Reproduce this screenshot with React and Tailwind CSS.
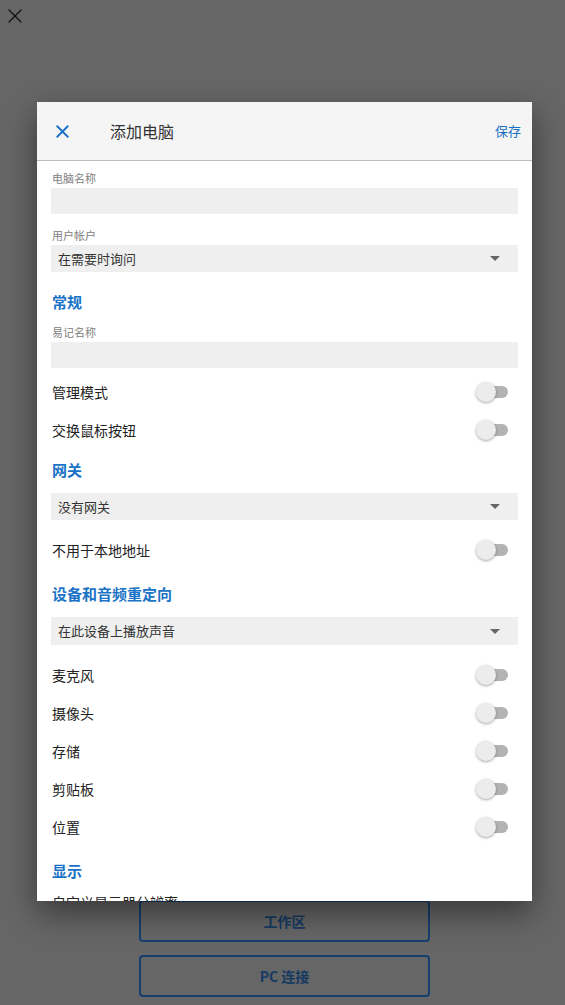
import { X } from 'lucide-react'

const font = { fontFamily: '"Noto Sans CJK SC", "Noto Sans", sans-serif' }

const Toggle = () => (
  <div className="relative w-[32px] h-[20px] mr-[10px] flex items-center">
    <div className="absolute right-0 w-[22px] h-[12px] rounded-full bg-[#b3b3b3]" />
    <div className="absolute left-0 w-[20px] h-[20px] rounded-full bg-[#ececec] shadow-[0_1px_3px_rgba(0,0,0,0.35)]" />
  </div>
)

const ToggleRow = ({ label, className = '', toggle = true }) => (
  <div className={`h-[38px] flex items-center justify-between pl-px ${className}`}>
    <span className="text-[14px] text-[#222]">{label}</span>
    {toggle && <Toggle />}
  </div>
)

const Select = ({ value, className = '' }) => (
  <div className={`h-[27px] bg-[#efefef] flex items-center justify-between pl-[7px] pr-[18px] ${className}`}>
    <span className="text-[13px] text-[#333]">{value}</span>
    <div className="w-0 h-0 border-l-[5px] border-r-[5px] border-t-[5px] border-l-transparent border-r-transparent border-t-[#666]" />
  </div>
)

const Label = ({ children, className = '' }) => (
  <div className={`text-[11px] leading-[16px] text-[#808080] pl-px ${className}`}>{children}</div>
)

const Heading = ({ children, className = '' }) => (
  <div className={`text-[15px] leading-[20px] font-bold text-[#1a73c6] pl-px ${className}`}>{children}</div>
)

export default function App() {
  return (
    <div className="relative w-[565px] h-[1005px] bg-[#666666] overflow-hidden" style={font}>
      {/* page behind the dialog */}
      <div className="flex flex-col h-full">
        <div className="pl-[3px] pt-[4px]">
          <X size={24} strokeWidth={1.3} className="text-[#111]" />
        </div>
        <div className="mt-auto mb-[8px] ml-[4px] flex flex-col items-center gap-[13px]">
          <div className="w-[291px] h-[42px] border-2 border-[#173f6e] rounded-[4px] flex items-center justify-center text-[14px] font-bold text-[#173a63]">
            工作区
          </div>
          <div className="w-[291px] h-[42px] border-2 border-[#173f6e] rounded-[4px] flex items-center justify-center text-[14px] font-bold text-[#173a63]">
            PC 连接
          </div>
        </div>
      </div>

      {/* dialog */}
      <div className="absolute left-[37px] top-[102px] w-[495px] h-[799px] bg-white overflow-hidden shadow-[0_12px_30px_rgba(0,0,0,0.45)]">
        <div className="h-[59px] bg-[#f5f5f5] border-b border-[#bdbdbd] flex items-center">
          <div className="pl-[15px] w-[73px]">
            <X size={21} strokeWidth={2.2} className="text-[#1a73c6]" />
          </div>
          <span className="text-[16px] text-[#333]">添加电脑</span>
          <span className="ml-auto pr-[11px] text-[13px] text-[#1a6fc2]">保存</span>
        </div>

        <div className="px-[14px] pt-[9px]">
          <Label>电脑名称</Label>
          <div className="mt-[2px] h-[26px] bg-[#efefef]" />

          <Label className="mt-[13px]">用户帐户</Label>
          <Select value="在需要时询问" className="mt-[2px]" />

          <Heading className="mt-[20px]">常规</Heading>
          <Label className="mt-[12px]">易记名称</Label>
          <div className="mt-[2px] h-[26px] bg-[#efefef]" />
          <ToggleRow label="管理模式" className="mt-[5px]" />
          <ToggleRow label="交换鼠标按钮" />

          <Heading className="mt-[11px]">网关</Heading>
          <Select value="没有网关" className="mt-[13px]" />
          <ToggleRow label="不用于本地地址" className="mt-[11px]" />

          <Heading className="mt-[15px]">设备和音频重定向</Heading>
          <Select value="在此设备上播放声音" className="mt-[13px] h-[28px]" />
          <ToggleRow label="麦克风" className="mt-[11px]" />
          <ToggleRow label="摄像头" />
          <ToggleRow label="存储" />
          <ToggleRow label="剪贴板" />
          <ToggleRow label="位置" />

          <Heading className="mt-[15px]">显示</Heading>
          <ToggleRow label="自定义显示器分辨率" className="mt-[2px]" toggle={false} />
        </div>
      </div>
    </div>
  )
}
